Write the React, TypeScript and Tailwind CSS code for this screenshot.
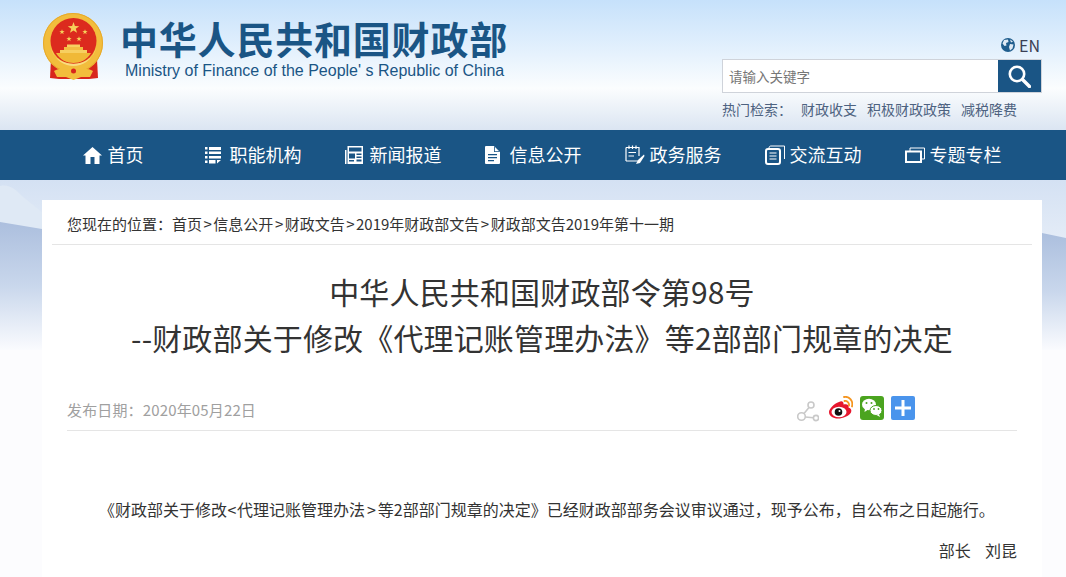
import React from "react";

const navItems = [
  { label: "首页", icon: <HomeIcon /> },
  { label: "职能机构", icon: <ListIcon /> },
  { label: "新闻报道", icon: <NewsIcon /> },
  { label: "信息公开", icon: <DocIcon /> },
  { label: "政务服务", icon: <PadIcon /> },
  { label: "交流互动", icon: <CopyIcon /> },
  { label: "专题专栏", icon: <WindowIcon /> },
];

const hotWords = ["财政收支", "积极财政政策", "减税降费"];

export default function App() {
  return (
    <div className="relative h-[577px] overflow-hidden bg-[#fcfcfe] font-['Noto_Sans_CJK_SC',sans-serif] text-[#333]">
      <Backdrop />
      <div className="relative">
        <Header />
        <Nav />
        <Article />
      </div>
    </div>
  );
}

function Backdrop() {
  return (
    <svg className="absolute inset-0" width="1066" height="577" aria-hidden="true">
      <defs>
        <linearGradient id="sky" x1="0" y1="0" x2="0" y2="1">
          <stop offset="0" stopColor="#c6e1fb" />
          <stop offset="0.42" stopColor="#e6f2fd" />
          <stop offset="0.68" stopColor="#fbfdfe" />
          <stop offset="1" stopColor="#dbe5f2" />
        </linearGradient>
        <linearGradient id="low" x1="0" y1="0" x2="0" y2="1">
          <stop offset="0" stopColor="#d4e1f3" />
          <stop offset="1" stopColor="#e4ecf7" />
        </linearGradient>
        <linearGradient id="hill" x1="0" y1="0" x2="0" y2="1">
          <stop offset="0" stopColor="#acbfde" />
          <stop offset="0.5" stopColor="#c9d7ec" />
          <stop offset="1" stopColor="#fafbfe" />
        </linearGradient>
      </defs>
      <rect width="1066" height="130" fill="url(#sky)" />
      <rect y="180" width="1066" height="60" fill="url(#low)" />
      <path d="M0 186 C10 184 16 190 22 196 L42 212 V229 L0 222 Z" fill="#dfe9f5" />
      <path d="M0 222 L42 229 V350 H0 Z" fill="url(#hill)" />
      <path d="M1042 233 L1066 238 V350 H1042 Z" fill="url(#hill)" />
    </svg>
  );
}

function Header() {
  return (
    <header className="flex h-[130px]">
      <div className="ml-[41px] mt-[11px]">
        <Emblem />
      </div>
      <div className="ml-[13px] mt-[18px]">
        <h1 className="text-[38px] leading-[40px] font-bold tracking-[0.8px] whitespace-nowrap text-[#1a5585]">
          中华人民共和国财政部
        </h1>
        <p className="ml-[5px] mt-[3px] font-['Liberation_Sans',sans-serif] text-[16px] leading-[20px] whitespace-nowrap text-[#1a5585]">
          Ministry of Finance of the People' s Republic of China
        </p>
      </div>
      <div className="ml-auto mr-[24px] w-[320px] pt-[35px]">
        <div className="flex h-[20px] items-center justify-end gap-[4px] pr-[2px] text-[16px] text-[#3a3f55]">
          <GlobeIcon />
          <span>EN</span>
        </div>
        <div className="mt-[4px] flex h-[34px] border border-[#cfd3da] bg-white">
          <span className="flex-1 pl-[6px] text-[13.5px] leading-[32px] text-[#777]">请输入关键字</span>
          <button className="flex w-[43px] items-center justify-center bg-[#1a5585]">
            <SearchIcon />
          </button>
        </div>
        <div className="mt-[6px] flex text-[14px] leading-[20px] text-[#4d6280]">
          <span className="w-[79px]">热门检索：</span>
          {hotWords.map((word) => (
            <a key={word} className="mr-[10px]">
              {word}
            </a>
          ))}
        </div>
      </div>
    </header>
  );
}

function Nav() {
  return (
    <nav className="h-[50px] bg-[#1a5585]">
      <ul className="ml-[43px] flex h-full">
        {navItems.map((item) => (
          <li key={item.label} className="flex w-[140px] items-center justify-center text-[18px] text-white">
            <span className="flex w-[25px] items-center">{item.icon}</span>
            <span className="pb-[2px]">{item.label}</span>
          </li>
        ))}
      </ul>
    </nav>
  );
}

function Sep() {
  return <span className="mx-[1.5px]">&gt;</span>;
}

function Article() {
  return (
    <main className="ml-[42px] mt-[20px] w-[1000px] bg-white px-[10px] pb-[40px]">
      <div className="h-[45px] border-b border-[#e5e5e5] px-[15px] text-[15px] leading-[47px] whitespace-nowrap">
        您现在的位置：
        <a>首页</a>
        <Sep />
        <a>信息公开</a>
        <Sep />
        <a>财政文告</a>
        <Sep />
        <a>2019年财政部文告</a>
        <Sep />
        <a>财政部文告2019年第十一期</a>
      </div>
      <h2 className="pt-[23px] text-center text-[30px] leading-[46px] tracking-[0.15px] text-[#333]">
        中华人民共和国财政部令第98号
        <br />
        --财政部关于修改《代理记账管理办法》等2部部门规章的决定
      </h2>
      <div className="mx-[15px] mt-[24px] flex h-[47px] items-start border-b border-[#e5e5e5] pt-[12px]">
        <span className="mt-[1px] text-[15px] leading-[26px] tracking-[0.15px] text-[#a0a0a0]">发布日期：2020年05月22日</span>
        <div className="ml-auto mr-[102px] flex items-start gap-[7px]">
          <ShareIcon />
          <WeiboIcon />
          <WechatIcon />
          <PlusIcon />
        </div>
      </div>
      <p className="mx-[15px] mt-[66px] indent-[2em] text-[16px] leading-[24px] whitespace-nowrap">
        《财政部关于修改<span className="mx-[0.5px]">&lt;</span>代理记账管理办法<span className="mx-[2px]">&gt;</span>
        等2部部门规章的决定》已经财政部部务会议审议通过，现予公布，自公布之日起施行。
      </p>
      <p className="mx-[15px] mt-[17px] text-right text-[16px] leading-[24px]">部长&nbsp;&nbsp;&nbsp;&nbsp;刘昆</p>
    </main>
  );
}

function SearchIcon() {
  return (
    <svg width="23" height="23" viewBox="0 0 23 23" fill="none" stroke="#fff" aria-hidden="true">
      <circle cx="9" cy="9" r="7.2" strokeWidth="2.6" />
      <path d="M14.5 14.5 L21.5 21.5" strokeWidth="3.4" strokeLinecap="round" />
    </svg>
  );
}

function Emblem() {
  return (
    <svg width="66" height="74" viewBox="0 0 66 74" aria-hidden="true">
      <path d="M10 48 H56 L57 67 L48 68 H18 L9 67 Z" fill="#d8261c" />
      <circle cx="32" cy="32" r="30" fill="#f2bd3c" />
      <circle cx="32" cy="32" r="29.5" fill="none" stroke="#e7a92b" strokeWidth="1" />
      <circle cx="32.5" cy="30" r="23" fill="#dc2a1e" />
      <path d="M10 37 C14 50 24 55 32.5 55 C41 55 51 50 55 37 C51 58 14 58 10 37 Z" fill="#f9dc82" />
      <path d="M15 42 H50 C46 49 39 52 32.5 52 C26 52 19 49 15 42 Z" fill="#f0b937" />
      <rect x="19" y="39" width="27" height="3" fill="#f7cf60" />
      <rect x="23" y="36" width="19" height="3" fill="#f3bd42" />
      <rect x="26" y="33.5" width="13" height="2.5" fill="#f7cf60" />
      <Star x={32.5} y={17} r={6} />
      <Star x={21} y={21} r={2.8} />
      <Star x={44} y={21} r={2.8} />
      <Star x={28} y={28} r={2.8} />
      <Star x={38} y={28} r={2.8} />
      <path d="M13 60 C20 56 27 58 32.5 62 C38 58 45 56 52 60 L49 66 H40 L32.5 69 L25 66 H16 Z" fill="#f2bd3c" />
      <circle cx="32.5" cy="60" r="2.5" fill="#d8261c" />
    </svg>
  );
}

function Star({ x, y, r }: { x: number; y: number; r: number }) {
  const pts = Array.from({ length: 10 }, (_, i) => {
    const a = (Math.PI / 5) * i - Math.PI / 2;
    const d = i % 2 === 0 ? r : r * 0.4;
    return `${x + d * Math.cos(a)},${y + d * Math.sin(a)}`;
  }).join(" ");
  return <polygon points={pts} fill="#f6cf5a" />;
}

function GlobeIcon() {
  return (
    <svg width="14" height="14" viewBox="0 0 14 14" aria-hidden="true">
      <circle cx="7" cy="7" r="7" fill="#1f5d8d" />
      <path d="M3 2 L7 1.5 L7.5 4 L5 5 L5.5 7.5 L3.5 8 L1.5 5.5 Z M9 6 L12.5 6.5 L11.5 10.5 L9 12.5 L8 9 Z M9 1.5 L12 3.5 L10 4.5 Z" fill="#dfeaf5" />
    </svg>
  );
}

function HomeIcon() {
  return (
    <svg width="19" height="18" viewBox="0 0 19 18" fill="#fff" aria-hidden="true">
      <path d="M9.5 1 L19 9.5 H16.5 V18 H11.5 V11 H7.5 V18 H2.5 V9.5 H0 Z" />
    </svg>
  );
}

function ListIcon() {
  return (
    <svg width="16" height="17" viewBox="0 0 16 17" fill="#fff" aria-hidden="true">
      <path d="M0 0h2.5v2.5H0zM0 4.5h2.5V7H0zM0 9h2.5v2.5H0zM0 13.5h2.5V16H0zM4 0h12v3H4zM4 4.5h12v2.5H4zM4 9h12v2.5H4zM4 13h6.5v3.5H4zM12 13h4l-4 3.5z" />
    </svg>
  );
}

function NewsIcon() {
  return (
    <svg width="18" height="18" viewBox="0 0 18 18" aria-hidden="true">
      <path d="M0 4h1.5v14H0z" fill="#fff" />
      <rect x="2.5" y="0" width="15.5" height="18" fill="#fff" />
      <rect x="4" y="1.5" width="12.5" height="4" fill="#1a5585" />
      <path d="M4 7.5h6v5H4zM11.5 7.5h5V9h-5zM11.5 10.5h5V12h-5zM4 14h5v1.5H4zM11.5 13.5h5v2h-5z" fill="#1a5585" />
    </svg>
  );
}

function DocIcon() {
  return (
    <svg width="15" height="18" viewBox="0 0 15 18" aria-hidden="true">
      <path d="M1 0 H9 L15 6 V17 a1 1 0 0 1 -1 1 H1 a1 1 0 0 1 -1 -1 V1 a1 1 0 0 1 1 -1 Z" fill="#fff" />
      <path d="M9 0 V6 H15 Z" fill="#1a5585" />
      <path d="M9.8 1 L14 5.2 H9.8 Z" fill="#fff" />
      <path d="M3 8h9v1.3H3zM3 11h9v1.3H3zM3 14h6v1.3H3z" fill="#1a5585" />
    </svg>
  );
}

function PadIcon() {
  return (
    <svg width="20" height="20" viewBox="0 0 20 20" fill="none" stroke="#fff" aria-hidden="true">
      <path d="M1 2.5 H14 V11 M14 16 H1 M1 2.5 V16 M4 .5 V4 M7.5 .5 V4 M11 .5 V4 M3.5 7.5 H11 M3.5 11 H9" strokeWidth="1.2" />
      <path d="M19 9.5 L13 15 L11 19 L15 18 L19.5 11 Z" fill="#fff" stroke="none" />
    </svg>
  );
}

function CopyIcon() {
  return (
    <svg width="20" height="20" viewBox="0 0 20 20" fill="none" stroke="#fff" aria-hidden="true">
      <path d="M4 3 C4 1.5 5 1 6 1 H19.5 V14" strokeWidth="1" />
      <rect x="1" y="4" width="14" height="15" rx="2" strokeWidth="2" />
      <path d="M4.5 8H11.5M4.5 11H11.5M4.5 14H11.5" strokeWidth="1.2" />
    </svg>
  );
}

function WindowIcon() {
  return (
    <svg width="20" height="16" viewBox="0 0 20 16" fill="none" stroke="#fff" aria-hidden="true">
      <path d="M5 4 V1 H19.5 V12 H16" strokeWidth="1" />
      <rect x="1" y="4.5" width="15" height="10.5" strokeWidth="2" />
    </svg>
  );
}

function ShareIcon() {
  return (
    <svg className="mr-[3px] mt-[5px]" width="22" height="22" viewBox="0 0 22 22" fill="none" stroke="#c9c9c9" strokeWidth="1.6" aria-hidden="true">
      <circle cx="14" cy="4" r="3" />
      <circle cx="4.5" cy="15.5" r="3.8" />
      <circle cx="19" cy="17" r="2.6" />
      <path d="M12 6.5 L7 12.5 M8.3 16 L16.4 16.8" />
    </svg>
  );
}

function WeiboIcon() {
  return (
    <svg width="24" height="23" viewBox="0 0 24 23" aria-hidden="true">
      <path d="M10 6 C13 4 15 6 14.5 8.5 C18 7.5 20.5 9 19.5 11.5 C22 12.5 23 14 22 16.5 C20 20 14 22.5 9 22.5 C4 22.5 0 20 0 16 C0 13 5 7.5 10 6 Z" fill="#e6162d" />
      <ellipse cx="10" cy="16" rx="7.5" ry="5.3" fill="#fff" />
      <circle cx="9.5" cy="16" r="3.8" fill="#111" />
      <circle cx="10.5" cy="15" r="1" fill="#fff" />
      <path d="M15 1 C20 0 24.5 4.5 23 10.5 M15.5 5 C18 4.5 20.5 7 20 9.5" fill="none" stroke="#f5951f" strokeWidth="1.8" strokeLinecap="round" />
    </svg>
  );
}

function WechatIcon() {
  return (
    <svg width="24" height="24" viewBox="0 0 24 24" aria-hidden="true">
      <rect width="24" height="24" rx="3" fill="#4ba41f" />
      <ellipse cx="9" cy="8.5" rx="7" ry="5.8" fill="#fff" />
      <path d="M5 12 L4.5 16 L9 13 Z" fill="#fff" />
      <ellipse cx="16" cy="14.5" rx="6" ry="5" fill="#fff" stroke="#4ba41f" />
      <path d="M19 18 L20 21 L16.5 19 Z" fill="#fff" />
      <circle cx="6.5" cy="7" r="1" fill="#4ba41f" />
      <circle cx="11.5" cy="7" r="1" fill="#4ba41f" />
      <circle cx="14" cy="13" r=".9" fill="#4ba41f" />
      <circle cx="18.5" cy="13" r=".9" fill="#4ba41f" />
    </svg>
  );
}

function PlusIcon() {
  return (
    <svg width="24" height="24" viewBox="0 0 24 24" aria-hidden="true">
      <rect width="24" height="24" rx="2" fill="#4a94ec" />
      <path d="M4 10.5 H10.5 V4 H13.5 V10.5 H20 V13.5 H13.5 V20 H10.5 V13.5 H4 Z" fill="#fff" />
    </svg>
  );
}
